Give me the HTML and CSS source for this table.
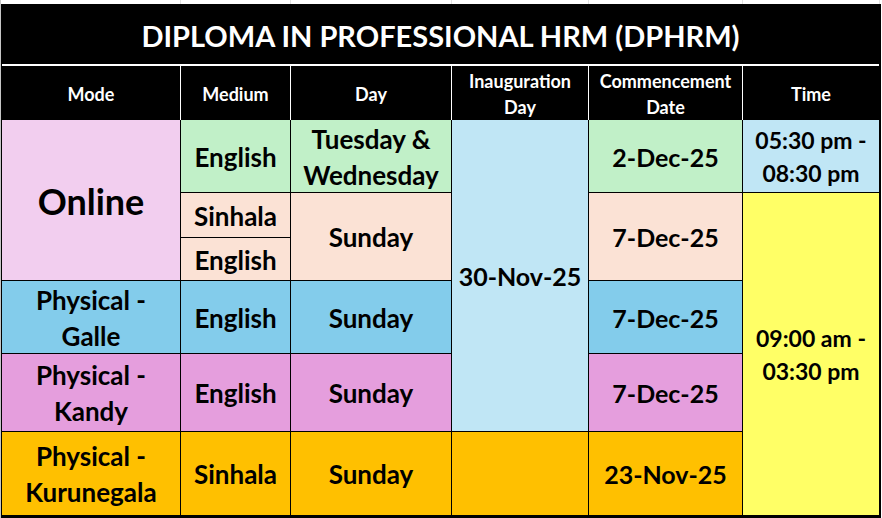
FILE: index.html
```html
<!DOCTYPE html>
<html>
<head>
<meta charset="utf-8">
<link rel="stylesheet" href="styles.css">
</head>
<body>
<div class="page">
  <div class="topstrip">
    <span></span><span></span><span></span><span></span><span></span><span></span>
  </div>
  <div class="sheet">
    <div class="title">DIPLOMA IN PROFESSIONAL HRM (DPHRM)</div>
    <div class="divider"></div>
    <div class="head">
      <div class="hc">Mode</div>
      <div class="hc">Medium</div>
      <div class="hc">Day</div>
      <div class="hc">Inauguration<br>Day</div>
      <div class="hc">Commencement<br>Date</div>
      <div class="hc">Time</div>
    </div>
    <div class="body">
      <div class="c pink online">Online</div>
      <div class="c green r1 m">English</div>
      <div class="c green r1 d">Tuesday &amp;<br>Wednesday</div>
      <div class="c lblue inaug date">30-Nov-25</div>
      <div class="c green r1 cd date">2-Dec-25</div>
      <div class="c lblue r1 t time">05:30 pm -<br>08:30 pm</div>

      <div class="c peach r2 m">Sinhala</div>
      <div class="c peach r2s d">Sunday</div>
      <div class="c peach r2s cd date">7-Dec-25</div>
      <div class="c yellow tyellow time">09:00 am -<br>03:30 pm</div>

      <div class="c peach r3 m">English</div>

      <div class="c blue r4 mo">Physical -<br>Galle</div>
      <div class="c blue r4 m">English</div>
      <div class="c blue r4 d">Sunday</div>
      <div class="c blue r4 cd date">7-Dec-25</div>

      <div class="c purple r5 mo">Physical -<br>Kandy</div>
      <div class="c purple r5 m">English</div>
      <div class="c purple r5 d">Sunday</div>
      <div class="c purple r5 cd date">7-Dec-25</div>

      <div class="c orange r6 mo">Physical -<br>Kurunegala</div>
      <div class="c orange r6 m">Sinhala</div>
      <div class="c orange r6 d">Sunday</div>
      <div class="c orange r6 in">&nbsp;</div>
      <div class="c orange r6 cd date">23-Nov-25</div>
    </div>
  </div>
</div>
</body>
</html>
```
FILE: styles.css
```css
html, body {
  margin: 0;
  padding: 0;
  background: #ffffff;
}
.page {
  width: 882px;
  height: 518px;
  border-left: 1px solid #c6c6c6;
  box-sizing: border-box;
  font-family: Lato, "Open Sans", sans-serif;
  font-weight: 700;
  overflow: hidden;
}
.topstrip {
  height: 4px;
  display: grid;
  grid-template-columns: 179px 110px 161px 137px 154px 137px;
  padding-left: 1px;
}
.topstrip span {
  border-right: 1px solid #e2e2e2;
}
.sheet {
  width: 880px;
  background: #000;
  padding: 0 2px 3px 1px;
  box-sizing: border-box;
}
.title {
  height: 60px;
  display: flex;
  align-items: center;
  justify-content: center;
  color: #fff;
  font-size: 29px;
  padding-top: 2px;
  box-sizing: border-box;
}
.divider {
  height: 2px;
  background: #fff;
}
.head {
  display: grid;
  grid-template-columns: 178px 109px 160px 136px 153px 136px;
  column-gap: 1px;
  background: #fff;
  height: 54px;
}
.hc {
  background: #000;
  color: #fff;
  font-size: 18px;
  line-height: 26px;
  padding-top: 2px;
  display: flex;
  align-items: center;
  justify-content: center;
  text-align: center;
}
.body {
  display: grid;
  grid-template-columns: 178px 109px 160px 136px 153px 136px;
  grid-template-rows: 72px 44px 42px 72px 77px 83px;
  gap: 1px;
  background: #000;
}
.c {
  display: flex;
  align-items: center;
  justify-content: center;
  text-align: center;
  color: #000;
  font-size: 26px;
  line-height: 36px;
  padding-top: 1px;
}
.pink { background: #f2ceef; }
.green { background: #c1f0c8; }
.peach { background: #fbe2d5; }
.lblue { background: #c0e6f5; }
.blue { background: #83cceb; }
.purple { background: #e59edd; }
.orange { background: #ffc000; }
.yellow { background: #ffff66; }

.online { grid-column: 1; grid-row: 1 / 4; font-size: 36px; padding-top: 2px; }
.mo { grid-column: 1; }
.m { grid-column: 2; }
.d { grid-column: 3; }
.in { grid-column: 4; }
.cd { grid-column: 5; }
.t { grid-column: 6; }
.r1 { grid-row: 1; }
.r2 { grid-row: 2; }
.r2s { grid-row: 2 / 4; }
.r3 { grid-row: 3; }
.r4 { grid-row: 4; }
.r5 { grid-row: 5; }
.r6 { grid-row: 6; }
.inaug { grid-column: 4; grid-row: 1 / 6; }
.tyellow { grid-column: 6; grid-row: 2 / 7; }
.date { font-size: 25px; }
.time { font-size: 23px; line-height: 33px; }
```
